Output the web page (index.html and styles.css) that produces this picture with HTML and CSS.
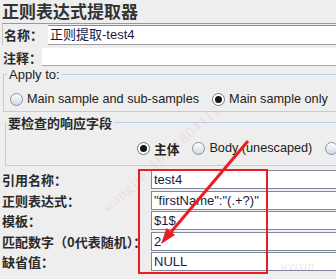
FILE: index.html
```html
<!DOCTYPE html>
<html lang="zh">
<head>
<meta charset="UTF-8" />
<title>正则表达式提取器</title>
<link rel="stylesheet" href="styles.css">
</head>
<body>
<div id="main">
  <div class="title">正则表达式提取器</div>

  <!-- 名称 / 注释 -->
  <div class="name-row">
    <span class="lbl">名称：</span>
    <div class="field name-field">正则提取-test4</div>
  </div>
  <div class="comment-row">
    <span class="lbl">注释：</span>
    <div class="field comment-field"></div>
  </div>

  <!-- Apply to -->
  <fieldset class="group apply">
    <legend>Apply to:</legend>
    <div class="radios">
      <span class="radio"></span><span class="rtext">Main sample and sub-samples</span>
      <span class="radio on"></span><span class="rtext">Main sample only</span>
    </div>
  </fieldset>

  <!-- 要检查的响应字段 -->
  <fieldset class="group check">
    <legend class="cn">要检查的响应字段</legend>
    <div class="radios">
      <span class="radio on"></span><span class="rtext cn">主体</span>
      <span class="radio"></span><span class="rtext">Body (unescaped)</span>
      <span class="radio"></span><span class="rtext">Body as a Document</span>
    </div>
  </fieldset>

  <!-- 下面的参数 -->
  <div class="params">
    <span class="lbl">引用名称：</span><div class="field">test4</div>
    <span class="lbl">正则表达式：</span><div class="field">"firstName":"(.+?)"</div>
    <span class="lbl">模板：</span><div class="field">$1$</div>
    <span class="lbl">匹配数字（0代表随机）：</span><div class="field">2</div>
    <span class="lbl">缺省值：</span><div class="field">NULL</div>
  </div>

  <!-- 标注 -->
  <div class="mark-box"></div>
  <svg class="mark-arrow" width="336" height="279" viewBox="0 0 336 279">
    <line x1="248" y1="141" x2="171" y2="232" stroke="#ec1c24" stroke-width="3"/>
    <polygon points="161,244 166.5,228 175,235" fill="#ec1c24"/>
  </svg>
  <div class="wm">wangjie_162-1804112</div>
  <div class="wm2">weixin</div>
</div>
</body>
</html>
```

FILE: styles.css
```css
body {
    margin: 0;
    background: #eeeeee;
    overflow: hidden;
}

#main {
    position: relative;
    width: 336px;
    height: 279px;
    overflow: hidden;
    color: #222;
    font-family: "Liberation Sans", "Noto Sans CJK SC", sans-serif;
    font-size: 13px;
}

.cn,
.lbl {
    font-family: "Noto Sans CJK SC", sans-serif;
    font-weight: bold;
    color: #2a2a2a;
}

.title {
    font-family: "Noto Sans CJK SC", sans-serif;
    font-weight: bold;
    font-size: 17px;
    line-height: 21px;
    height: 23px;
    padding-left: 2px;
    color: #333;
}

.name-row {
    display: flex;
    align-items: center;
    height: 21px;
    border-top: 1px solid #9a9a9a;
    border-left: 1px solid #c4c4c4;
    margin-left: 2px;
}

.name-row .lbl {
    width: 44px;
    padding-left: 1px;
}

.comment-row {
    display: flex;
    align-items: center;
    height: 20px;
    margin-top: 2px;
}

.comment-row .lbl {
    width: 39px;
    padding-left: 3px;
}

.field {
    flex: 1;
    background: #fff;
    height: 18px;
    line-height: 18px;
    padding-left: 2px;
    color: #1a1a40;
    font-family: "Liberation Sans", "Noto Sans CJK SC", sans-serif;
    font-size: 13px;
    white-space: nowrap;
}

.name-field {
    height: 18px;
    border-top: 1px solid #8a8a8a;
    border-bottom: 1px solid #a0a0a0;
}

.comment-field {
    height: 17px;
    border-bottom: 1px solid #a8a8a8;
}

.group {
    border: 1px solid #b8cfe5;
    width: 390px;
    padding: 0;
    margin: 0;
}

.group legend {
    padding: 0 2px;
    font-size: 13px;
    line-height: 13px;
    height: 13px;
}

.apply {
    margin: 1px 0 0 3px;
}

.apply legend {
    margin-left: 3px;
}

.check {
    margin: 4px 0 0 5px;
}

.check legend {
    margin-left: 0;
}

.radios {
    display: flex;
    align-items: center;
    height: 14px;
    white-space: nowrap;
}

.apply .radios {
    padding: 11px 0 5px 6px;
}

.check .radios {
    padding: 12px 0 10px 131px;
}

.radio {
    flex: none;
    width: 11px;
    height: 11px;
    border: 1px solid #8a93a2;
    border-radius: 50%;
    background: linear-gradient(#ffffff, #cdd8e6);
    position: relative;
    margin-right: 4px;
}

.radio.on {
    background: #fff;
    border-color: #6f7885;
}

.radio.on::after {
    content: "";
    position: absolute;
    left: 2px;
    top: 2px;
    width: 7px;
    height: 7px;
    border-radius: 50%;
    background: #151515;
}

.rtext {
    margin-right: 13px;
    color: #222;
    font-size: 12.7px;
}

.params {
    display: grid;
    grid-template-columns: 151px 1fr;
    grid-auto-rows: 19px;
    row-gap: 1.5px;
    margin-top: 4px;
    align-items: center;
}

.params .lbl {
    padding-left: 2px;
    white-space: nowrap;
}

.params .field {
    height: 17px;
    line-height: 17px;
    border: 1px solid #7e8898;
    border-right: none;
    padding-left: 2px;
}

.mark-box {
    position: absolute;
    left: 138px;
    top: 169px;
    width: 126px;
    height: 101px;
    border: 2px solid #ec1c24;
}

.mark-arrow {
    position: absolute;
    left: 0;
    top: 0;
}

.wm {
    position: absolute;
    left: 85px;
    top: 150px;
    transform: rotate(-42deg);
    font-family: "Liberation Serif", serif;
    font-size: 15px;
    color: rgba(230, 110, 120, 0.17);
    letter-spacing: 1px;
}

.wm2 {
    position: absolute;
    left: 280px;
    top: 258px;
    font-family: "Liberation Serif", serif;
    font-style: italic;
    font-size: 13px;
    color: rgba(150, 150, 150, 0.22);
}
```
